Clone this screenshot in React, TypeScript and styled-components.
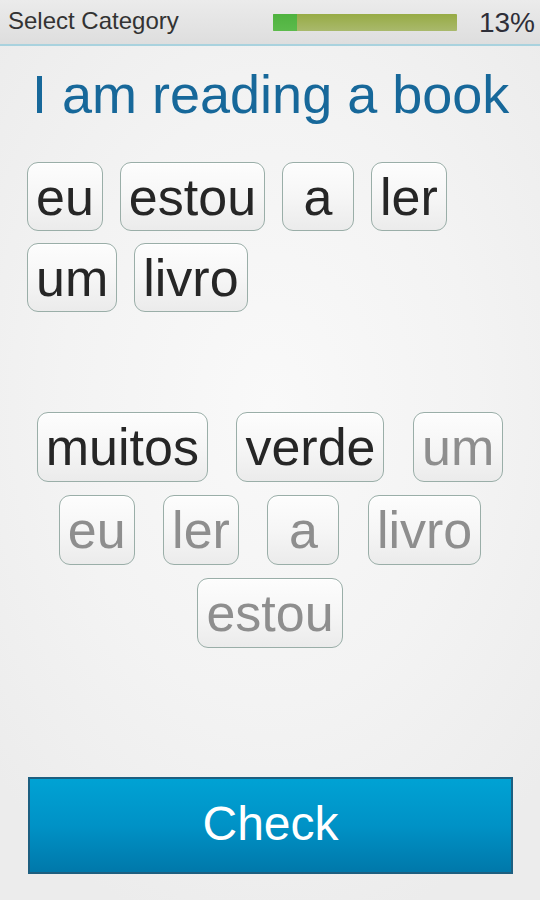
import React from "react";
import styled, { createGlobalStyle } from "styled-components";

const GlobalStyle = createGlobalStyle`
  html, body {
    margin: 0;
    padding: 0;
    background: #f1f1f1;
  }
  body {
    font-family: "Liberation Sans", Arial, sans-serif;
  }
  * { box-sizing: border-box; }
`;

const Screen = styled.div`
  width: 540px;
  height: 900px;
  display: flex;
  flex-direction: column;
  overflow: hidden;
  background: radial-gradient(ellipse 70% 60% at 50% 45%, #f9f9f9 0%, #f3f3f3 55%, #ececec 100%);
`;

const Header = styled.header`
  height: 46px;
  flex: none;
  display: flex;
  align-items: center;
  padding: 0 5px 2px 8px;
  background: linear-gradient(#ebebeb, #dedede);
  border-bottom: 2px solid #a9d2de;
`;

const HeaderTitle = styled.div`
  font-size: 24px;
  color: #333333;
  flex: 1;
`;

const ProgressTrack = styled.div`
  width: 184px;
  height: 17px;
  margin-top: 3px;
  display: flex;
  background: linear-gradient(#97ab45, #a9b96c);
  border-radius: 1px;
  overflow: hidden;
`;

const ProgressFill = styled.div`
  height: 100%;
  background: linear-gradient(#4fb23f, #5cbb4c);
`;

const Percent = styled.div`
  font-size: 28px;
  color: #2e2e38;
  margin-left: 22px;
  margin-top: 3px;
`;

const Title = styled.h1`
  margin: 21px 0 0 32px;
  font-size: 54px;
  line-height: 1;
  font-weight: normal;
  color: #17689a;
  white-space: nowrap;
`;

const AnswerZone = styled.div`
  height: 250px;
  margin-top: 41px;
  padding: 0 27px;
  display: flex;
  flex-wrap: wrap;
  align-content: flex-start;
  column-gap: 17px;
  row-gap: 12px;
`;

const Bank = styled.div`
  padding: 0 10px;
  display: flex;
  flex-wrap: wrap;
  justify-content: center;
  align-content: flex-start;
  column-gap: 28.5px;
  row-gap: 13px;
`;

const Tile = styled.div<{ $used?: boolean; $h?: number }>`
  height: ${(p) => p.$h ?? 69}px;
  min-width: 72px;
  padding: 0 8px;
  display: flex;
  align-items: center;
  justify-content: center;
  border: 1.5px solid #9aaea8;
  border-radius: 11px;
  background: linear-gradient(#fdfdfd 0%, #f6f6f6 50%, #ebebeb 100%);
  box-shadow: inset 0 1px 0 #ffffff;
  font-size: 52px;
  line-height: 1;
  color: ${(p) => (p.$used ? "#8e8e8e" : "#262626")};
  white-space: nowrap;
`;

const Footer = styled.div`
  margin-top: auto;
  padding: 0 27px 26px 28px;
`;

const CheckButton = styled.button`
  width: 100%;
  height: 97px;
  display: flex;
  align-items: center;
  justify-content: center;
  border: 2px solid #1d5f80;
  border-radius: 0;
  background: linear-gradient(#00a2d4 0%, #0092c6 50%, #0078aa 100%);
  color: #ffffff;
  font-family: "Liberation Sans", Arial, sans-serif;
  font-size: 48px;
  padding: 0 0 4px 0;
  cursor: pointer;
`;

const answer = ["eu", "estou", "a", "ler", "um", "livro"];
const bank: { w: string; used: boolean }[] = [
  { w: "muitos", used: false },
  { w: "verde", used: false },
  { w: "um", used: true },
  { w: "eu", used: true },
  { w: "ler", used: true },
  { w: "a", used: true },
  { w: "livro", used: true },
  { w: "estou", used: true },
];

export default function App() {
  const progress = 13;
  return (
    <>
      <GlobalStyle />
      <Screen>
        <Header>
          <HeaderTitle>Select Category</HeaderTitle>
          <ProgressTrack>
            <ProgressFill style={{ width: `${progress}%` }} />
          </ProgressTrack>
          <Percent>{progress}%</Percent>
        </Header>
        <Title>I am reading a book</Title>
        <AnswerZone>
          {answer.map((w, i) => (
            <Tile key={i}>{w}</Tile>
          ))}
        </AnswerZone>
        <Bank>
          {bank.map((b, i) => (
            <Tile key={i} $used={b.used} $h={70}>
              {b.w}
            </Tile>
          ))}
        </Bank>
        <Footer>
          <CheckButton>Check</CheckButton>
        </Footer>
      </Screen>
    </>
  );
}
